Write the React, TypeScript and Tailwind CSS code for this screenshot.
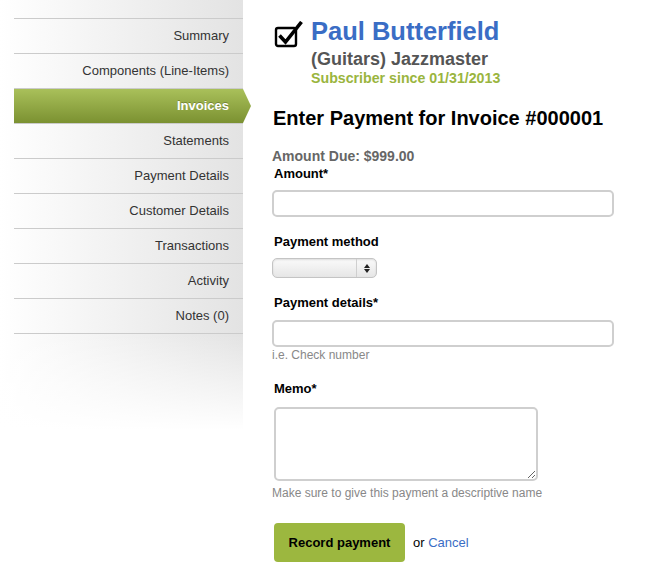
const NAV = [
  { id: 1, title: "Summary" },
  { id: 2, title: "Components (Line-Items)" },
  { id: 3, title: "Invoices", active: true },
  { id: 4, title: "Statements" },
  { id: 5, title: "Payment Details" },
  { id: 6, title: "Customer Details" },
  { id: 7, title: "Transactions" },
  { id: 8, title: "Activity" },
  { id: 9, title: "Notes (0)" },
]

function CheckIcon() {
  return (
    <svg width="29" height="27" viewBox="0 0 29 27" className="shrink-0">
      <rect x="2" y="7" width="20" height="18" rx="2" fill="none" stroke="#000" strokeWidth="2.4" />
      <path d="M5.5 14.5 L11.5 21 L27.5 1" fill="none" stroke="#000" strokeWidth="3.6" strokeLinejoin="miter" />
    </svg>
  )
}

function Sidebar() {
  return (
    <aside className="relative w-[243px] shrink-0 bg-[linear-gradient(to_bottom,rgba(255,255,255,0)_335px,#fff_430px),linear-gradient(to_right,#fff,#e3e3e3)] pt-[18px]">
      <ul className="ml-[14px] border-t border-[#cbcbcb]">
        {NAV.map((item) =>
          item.active ? (
            <li
              key={item.id}
              className="relative flex h-[35px] items-center justify-end border-b border-[#cbcbcb] bg-[linear-gradient(to_bottom,#a9c05a,#7b9131)] pr-[14px] text-[13px] font-bold text-white [text-shadow:0_-1px_0_rgba(0,0,0,0.25)]"
            >
              {item.title}
              <span className="absolute right-[-8px] top-0 h-[34px] w-[8px] bg-[linear-gradient(to_bottom,#a9c05a,#7b9131)] [clip-path:polygon(0_0,100%_50%,0_100%)]" />
            </li>
          ) : (
            <li
              key={item.id}
              className="flex h-[35px] items-center justify-end border-b border-[#cbcbcb] pr-[14px] text-[13px] text-[#333]"
            >
              {item.title}
            </li>
          )
        )}
      </ul>
    </aside>
  )
}

function Label({ children, className = "" }: { children: React.ReactNode; className?: string }) {
  return <div className={`ml-[2px] text-[13px] font-bold leading-[16px] text-black ${className}`}>{children}</div>
}

function TextInput({ className = "" }: { className?: string }) {
  return (
    <input
      type="text"
      className={`block h-[27px] w-[342px] rounded-[5px] border-2 border-[#cfcfcf] bg-white px-2 text-[13px] outline-none ${className}`}
    />
  )
}

function Select() {
  return (
    <div className="mt-[8px] flex h-[20px] w-[105px] items-stretch rounded-[5px] border border-[#c4c4c4] bg-[linear-gradient(to_bottom,#fafafa,#e6e6e6)] shadow-[inset_0_1px_2px_rgba(0,0,0,0.12)]">
      <div className="flex-1" />
      <div className="flex w-[20px] flex-col items-center justify-center gap-[1px] border-l border-[#cfcfcf]">
        <svg width="6" height="4" viewBox="0 0 6 4">
          <path d="M0 4 L3 0 L6 4 Z" fill="#222" />
        </svg>
        <svg width="6" height="4" viewBox="0 0 6 4">
          <path d="M0 0 L3 4 L6 0 Z" fill="#222" />
        </svg>
      </div>
    </div>
  )
}

function PaymentForm() {
  return (
    <main className="ml-[29px] pt-[17px]">
      <div className="flex items-start gap-[8px]">
        <div className="ml-[2px] mt-[4px]">
          <CheckIcon />
        </div>
        <div>
          <div className="text-[25.5px] font-bold leading-[28px] text-[#3a6dc5]">Paul Butterfield</div>
          <div className="mt-[4px] text-[18px] font-bold leading-[20px] text-[#555]">(Guitars) Jazzmaster</div>
          <div className="mt-[1px] text-[14.2px] font-bold leading-[16px] text-[#9ab53e]">Subscriber since 01/31/2013</div>
        </div>
      </div>

      <h1 className="ml-[1px] mt-[20px] text-[20px] font-bold leading-[24px] text-black">
        Enter Payment for Invoice #000001
      </h1>

      <div className="mt-[18px] text-[14px] font-bold leading-[16px] text-[#666]">Amount Due: $999.00</div>
      <Label className="mt-[2px]">Amount*</Label>
      <TextInput className="mt-[8px]" />

      <Label className="mt-[17px]">Payment method</Label>
      <Select />

      <Label className="mt-[17px]">Payment details*</Label>
      <TextInput className="mt-[9px]" />
      <div className="mt-[1px] text-[12px] leading-[14px] text-[#888]">i.e. Check number</div>

      <Label className="mt-[19px]">Memo*</Label>
      <textarea className="mt-[10px] ml-[2px] block h-[74px] w-[264px] rounded-[5px] border-2 border-[#cfcfcf] bg-white outline-none" />
      <div className="mt-[5px] text-[12px] leading-[14px] text-[#888]">Make sure to give this payment a descriptive name</div>

      <div className="ml-[2px] mt-[23px] flex items-center gap-[8px]">
        <button className="h-[39px] w-[131px] rounded-[4px] bg-[#9cb73f] text-[13px] font-bold text-black">
          Record payment
        </button>
        <span className="text-[13px] text-black">
          or <a className="text-[#3a6dc5]">Cancel</a>
        </span>
      </div>
    </main>
  )
}

export default function App() {
  return (
    <div className="flex min-h-[569px] bg-white font-['Liberation_Sans',Arial,sans-serif]">
      <Sidebar />
      <PaymentForm />
    </div>
  )
}
